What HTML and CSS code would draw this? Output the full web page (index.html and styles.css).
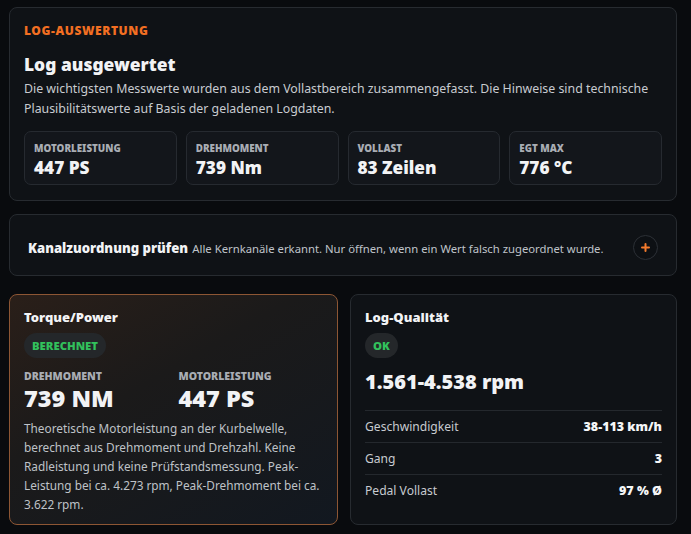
FILE: index.html
```html
<!DOCTYPE html>
<html lang="de">
<head>
<meta charset="utf-8">
<link rel="stylesheet" href="styles.css">
</head>
<body>
<main class="page">
  <section class="card hero">
    <div class="eyebrow">LOG-AUSWERTUNG</div>
    <h1 class="hero-title">Log ausgewertet</h1>
    <p class="hero-desc">Die wichtigsten Messwerte wurden aus dem Vollastbereich zusammengefasst. Die Hinweise sind technische Plausibilitätswerte auf Basis der geladenen Logdaten.</p>
    <div class="stats">
      <div class="stat"><div class="stat-label">MOTORLEISTUNG</div><div class="stat-value">447 PS</div></div>
      <div class="stat"><div class="stat-label">DREHMOMENT</div><div class="stat-value">739 Nm</div></div>
      <div class="stat"><div class="stat-label">VOLLAST</div><div class="stat-value">83 Zeilen</div></div>
      <div class="stat"><div class="stat-label">EGT MAX</div><div class="stat-value">776 °C</div></div>
    </div>
  </section>

  <section class="card channel">
    <div class="channel-text"><strong class="channel-title">Kanalzuordnung prüfen</strong> <span class="channel-desc">Alle Kernkanäle erkannt. Nur öffnen, wenn ein Wert falsch zugeordnet wurde.</span></div>
    <button class="plus" type="button" aria-label="öffnen">
      <svg width="9" height="9" viewBox="0 0 9 9"><path d="M4.5 1v7M1 4.5h7" stroke="#f47a2c" stroke-width="2" stroke-linecap="round"/></svg>
    </button>
  </section>

  <div class="pair">
    <section class="card torque">
      <h2 class="card-title">Torque/Power</h2>
      <span class="badge">BERECHNET</span>
      <div class="metrics">
        <div><div class="metric-label">DREHMOMENT</div><div class="metric-value">739 NM</div></div>
        <div><div class="metric-label">MOTORLEISTUNG</div><div class="metric-value">447 PS</div></div>
      </div>
      <p class="torque-desc">Theoretische Motorleistung an der Kurbelwelle, berechnet aus Drehmoment und Drehzahl. Keine Radleistung und keine Prüfstandsmessung. Peak-Leistung bei ca. 4.273 rpm, Peak-Drehmoment bei ca. 3.622 rpm.</p>
    </section>

    <section class="card quality">
      <h2 class="card-title">Log-Qualität</h2>
      <span class="badge">OK</span>
      <div class="rpm">1.561-4.538 rpm</div>
      <div class="rows">
        <div class="row"><span>Geschwindigkeit</span><b>38-113 km/h</b></div>
        <div class="row"><span>Gang</span><b>3</b></div>
        <div class="row"><span>Pedal Vollast</span><b>97 % Ø</b></div>
      </div>
    </section>
  </div>
</main>
</body>
</html>
```

FILE: styles.css
```css
* { box-sizing: border-box; }
html, body { margin: 0; height: 100%; }
body {
  background: #090b0e;
  font-family: "Noto Sans", "Open Sans", sans-serif;
  color: #f2f3f5;
}
.page {
  width: 668px;
  margin-left: 9px;
  padding-top: 7px;
  display: flex;
  flex-direction: column;
}
.card {
  background: #0f1216;
  border: 1px solid #272b30;
  border-radius: 8px;
}
.hero {
  padding: 15px 14px 15px 14px;
}
.eyebrow {
  color: #f36f22;
  font-weight: 900;
  font-size: 12px;
  letter-spacing: 0.6px;
  line-height: 16px;
}
.hero-title {
  margin: 13px 0 0;
  font-size: 17.4px;
  font-weight: 900;
  line-height: 24px;
}
.hero-desc {
  margin: 3px 0 0;
  font-size: 12.35px;
  line-height: 20px;
  color: #c8cbd0;
}
.stats {
  margin-top: 12px;
  display: grid;
  grid-template-columns: repeat(4, 1fr);
  gap: 9px;
}
.stat {
  background: #13161b;
  border: 1px solid #262a30;
  border-radius: 7px;
  height: 54px;
  padding: 10px 9px 0;
}
.stat-label {
  font-size: 9.8px;
  font-weight: 900;
  line-height: 14px;
  color: #a9adb4;
}
.stat-value {
  margin-top: 1px;
  font-size: 17.2px;
  font-weight: 900;
  line-height: 22px;
}
.channel {
  margin-top: 13px;
  height: 62px;
  padding: 0 18px;
  display: flex;
  align-items: center;
  justify-content: space-between;
}
.channel-text { padding-top: 4px; }
.channel-title {
  font-size: 13.1px;
  font-weight: 900;
}
.channel-desc {
  font-size: 11.3px;
  color: #bfc3c9;
}
.plus {
  width: 25px;
  height: 25px;
  border-radius: 50%;
  border: 1px solid #2c3036;
  background: #0d1014;
  display: flex;
  align-items: center;
  justify-content: center;
  padding: 0;
  margin-top: 4px;
}
.pair {
  margin-top: 18px;
  display: grid;
  grid-template-columns: 329px 327px;
  gap: 12px;
}
.torque, .quality {
  height: 231px;
  padding: 13px 14px 0;
}
.torque {
  border-color: #8d5634;
  background: linear-gradient(150deg, #2a1f19 0%, #1b1a1a 40%, #121820 100%);
}
.card-title {
  margin: 0;
  font-size: 13px;
  font-weight: 900;
  line-height: 18px;
}
.badge {
  display: inline-block;
  margin-top: 7px;
  height: 25px;
  line-height: 25px;
  padding: 0 8px;
  border-radius: 13px;
  background: #24272a;
  color: #32c15c;
  font-size: 11.3px;
  font-weight: 900;
}
.metrics {
  margin-top: 11px;
  display: grid;
  grid-template-columns: 1fr 1fr;
  gap: 10px;
}
.metric-label {
  font-size: 10.5px;
  font-weight: 900;
  color: #a9adb4;
  line-height: 14px;
}
.metric-value {
  font-size: 23.5px;
  font-weight: 900;
  line-height: 31px;
}
.torque-desc {
  margin: 5px 0 0;
  font-size: 11.8px;
  line-height: 19px;
  color: #bfc2c7;
}
.rpm {
  margin-top: 11px;
  font-size: 20px;
  font-weight: 900;
  line-height: 26px;
}
.rows { margin-top: 15px; }
.row {
  display: flex;
  justify-content: space-between;
  align-items: center;
  height: 32px;
  border-top: 1px solid #24282d;
  font-size: 12.1px;
  color: #c8cbd0;
}
.row b {
  color: #f5f6f7;
  font-weight: 900;
  font-size: 12.5px;
}
```
